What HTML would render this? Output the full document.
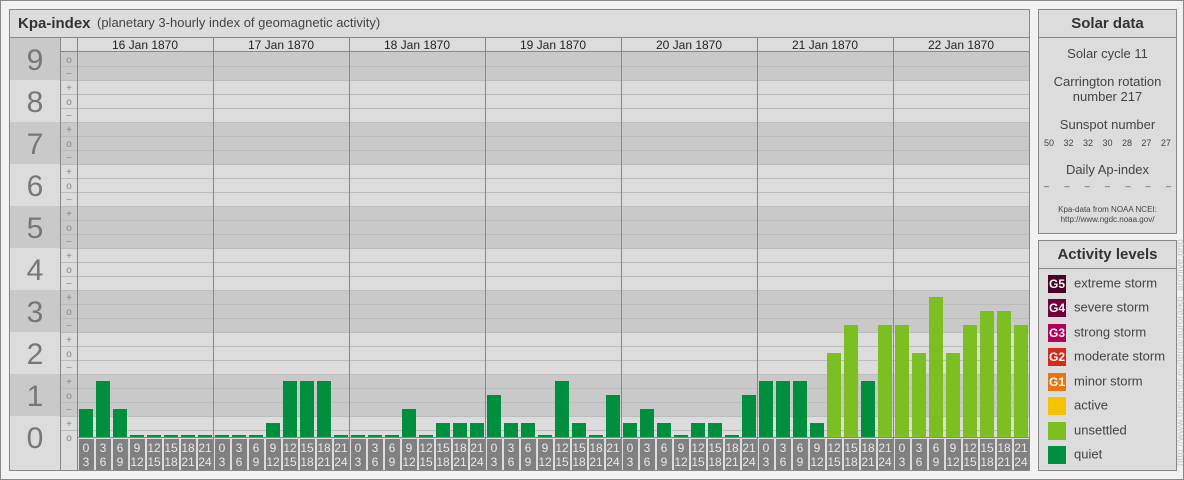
<!DOCTYPE html>
<html><head><meta charset="utf-8"><style>
body{margin:0;width:1184px;height:480px;background:#f2f2f2;font-family:"Liberation Sans",sans-serif;overflow:hidden;position:relative}
.frame{position:absolute;left:0;top:0;width:1182px;height:478px;border:1px solid #888}
.panel{position:absolute;background:#dcdcdc;border:1px solid #888;box-sizing:border-box}
.ttl{position:absolute;left:0;right:0;top:0;height:28px;border-bottom:1px solid #888;box-sizing:border-box;text-align:center;font-weight:bold;font-size:15px;line-height:28px;color:#333}
.c{text-align:center;color:#444;font-size:13px;position:absolute;left:0;right:0}
.lv{position:absolute;left:9px;font-size:13px;color:#444}
.lv b{display:inline-block;width:18px;height:18px;vertical-align:middle;margin-right:8px;color:#fff;font-size:12px;text-align:center;line-height:18px}
</style></head><body>
<div class="frame"></div>
<div class="panel" style="left:9px;top:9px;width:1021px;height:462px"></div>
<svg style="position:absolute;left:0;top:0" width="1184" height="480" font-family="Liberation Sans, sans-serif">
<g fill="#c9c9c9">
<rect x="10" y="37" width="50" height="15"/>
<rect x="10" y="52" width="1019" height="28"/><rect x="10" y="122" width="1019" height="42"/><rect x="10" y="206" width="1019" height="42"/><rect x="10" y="290" width="1019" height="42"/><rect x="10" y="374" width="1019" height="42"/>
</g>
<g stroke="#bcbcbc" stroke-width="1">
<path d="M60 66.5H1029M60 80.5H1029M60 94.5H1029M60 108.5H1029M60 122.5H1029M60 136.5H1029M60 150.5H1029M60 164.5H1029M60 178.5H1029M60 192.5H1029M60 206.5H1029M60 220.5H1029M60 234.5H1029M60 248.5H1029M60 262.5H1029M60 276.5H1029M60 290.5H1029M60 304.5H1029M60 318.5H1029M60 332.5H1029M60 346.5H1029M60 360.5H1029M60 374.5H1029M60 388.5H1029M60 402.5H1029M60 416.5H1029M60 430.5H1029"/>
</g>
<path d="M9 37.5H1029M60 51.5H1029M60.5 37V470M77.5 37V470M213.5 37V470M349.5 37V470M485.5 37V470M621.5 37V470M757.5 37V470M893.5 37V470M77 437.5H1029" stroke="#888" fill="none"/>
<text x="18" y="28" font-size="15" font-weight="bold" fill="#333">Kpa-index</text>
<text x="97" y="27" font-size="13" fill="#444">(planetary 3-hourly index of geomagnetic activity)</text>
<g font-size="12" fill="#222" text-anchor="middle">
<text x="145" y="49">16 Jan 1870</text><text x="281" y="49">17 Jan 1870</text><text x="417" y="49">18 Jan 1870</text><text x="553" y="49">19 Jan 1870</text><text x="689" y="49">20 Jan 1870</text><text x="825" y="49">21 Jan 1870</text><text x="961" y="49">22 Jan 1870</text>
</g>
<g font-size="30" fill="#777" text-anchor="middle">
<text x="35" y="70">9</text><text x="35" y="112">8</text><text x="35" y="154">7</text><text x="35" y="196">6</text><text x="35" y="238">5</text><text x="35" y="280">4</text><text x="35" y="322">3</text><text x="35" y="364">2</text><text x="35" y="406">1</text><text x="35" y="448">0</text>
</g>
<g font-size="10" fill="#888" text-anchor="middle">
<text x="69" y="63">o</text><text x="69" y="77">−</text><text x="69" y="91">+</text><text x="69" y="105">o</text><text x="69" y="119">−</text><text x="69" y="133">+</text><text x="69" y="147">o</text><text x="69" y="161">−</text><text x="69" y="175">+</text><text x="69" y="189">o</text><text x="69" y="203">−</text><text x="69" y="217">+</text><text x="69" y="231">o</text><text x="69" y="245">−</text><text x="69" y="259">+</text><text x="69" y="273">o</text><text x="69" y="287">−</text><text x="69" y="301">+</text><text x="69" y="315">o</text><text x="69" y="329">−</text><text x="69" y="343">+</text><text x="69" y="357">o</text><text x="69" y="371">−</text><text x="69" y="385">+</text><text x="69" y="399">o</text><text x="69" y="413">−</text><text x="69" y="427">+</text><text x="69" y="441">o</text>
</g>
<g fill="#008f3e">
<rect x="79" y="409" width="14" height="28"/><rect x="96" y="381" width="14" height="56"/><rect x="113" y="409" width="14" height="28"/><rect x="130" y="435" width="14" height="2"/><rect x="147" y="435" width="14" height="2"/><rect x="164" y="435" width="14" height="2"/><rect x="181" y="435" width="14" height="2"/><rect x="198" y="435" width="14" height="2"/>
<rect x="215" y="435" width="14" height="2"/><rect x="232" y="435" width="14" height="2"/><rect x="249" y="435" width="14" height="2"/><rect x="266" y="423" width="14" height="14"/><rect x="283" y="381" width="14" height="56"/><rect x="300" y="381" width="14" height="56"/><rect x="317" y="381" width="14" height="56"/><rect x="334" y="435" width="14" height="2"/>
<rect x="351" y="435" width="14" height="2"/><rect x="368" y="435" width="14" height="2"/><rect x="385" y="435" width="14" height="2"/><rect x="402" y="409" width="14" height="28"/><rect x="419" y="435" width="14" height="2"/><rect x="436" y="423" width="14" height="14"/><rect x="453" y="423" width="14" height="14"/><rect x="470" y="423" width="14" height="14"/>
<rect x="487" y="395" width="14" height="42"/><rect x="504" y="423" width="14" height="14"/><rect x="521" y="423" width="14" height="14"/><rect x="538" y="435" width="14" height="2"/><rect x="555" y="381" width="14" height="56"/><rect x="572" y="423" width="14" height="14"/><rect x="589" y="435" width="14" height="2"/><rect x="606" y="395" width="14" height="42"/>
<rect x="623" y="423" width="14" height="14"/><rect x="640" y="409" width="14" height="28"/><rect x="657" y="423" width="14" height="14"/><rect x="674" y="435" width="14" height="2"/><rect x="691" y="423" width="14" height="14"/><rect x="708" y="423" width="14" height="14"/><rect x="725" y="435" width="14" height="2"/><rect x="742" y="395" width="14" height="42"/>
<rect x="759" y="381" width="14" height="56"/><rect x="776" y="381" width="14" height="56"/><rect x="793" y="381" width="14" height="56"/><rect x="810" y="423" width="14" height="14"/><rect x="861" y="381" width="14" height="56"/>
</g>
<g fill="#7bbf22">
<rect x="827" y="353" width="14" height="84"/><rect x="844" y="325" width="14" height="112"/><rect x="878" y="325" width="14" height="112"/>
<rect x="895" y="325" width="14" height="112"/><rect x="912" y="353" width="14" height="84"/><rect x="929" y="297" width="14" height="140"/><rect x="946" y="353" width="14" height="84"/><rect x="963" y="325" width="14" height="112"/><rect x="980" y="311" width="14" height="126"/><rect x="997" y="311" width="14" height="126"/><rect x="1014" y="325" width="14" height="112"/>
</g>
<g fill="#808080">
<rect x="79" y="439" width="15" height="31"/><rect x="96" y="439" width="15" height="31"/><rect x="113" y="439" width="15" height="31"/><rect x="130" y="439" width="15" height="31"/><rect x="147" y="439" width="15" height="31"/><rect x="164" y="439" width="15" height="31"/><rect x="181" y="439" width="15" height="31"/><rect x="198" y="439" width="15" height="31"/>
<rect x="215" y="439" width="15" height="31"/><rect x="232" y="439" width="15" height="31"/><rect x="249" y="439" width="15" height="31"/><rect x="266" y="439" width="15" height="31"/><rect x="283" y="439" width="15" height="31"/><rect x="300" y="439" width="15" height="31"/><rect x="317" y="439" width="15" height="31"/><rect x="334" y="439" width="15" height="31"/>
<rect x="351" y="439" width="15" height="31"/><rect x="368" y="439" width="15" height="31"/><rect x="385" y="439" width="15" height="31"/><rect x="402" y="439" width="15" height="31"/><rect x="419" y="439" width="15" height="31"/><rect x="436" y="439" width="15" height="31"/><rect x="453" y="439" width="15" height="31"/><rect x="470" y="439" width="15" height="31"/>
<rect x="487" y="439" width="15" height="31"/><rect x="504" y="439" width="15" height="31"/><rect x="521" y="439" width="15" height="31"/><rect x="538" y="439" width="15" height="31"/><rect x="555" y="439" width="15" height="31"/><rect x="572" y="439" width="15" height="31"/><rect x="589" y="439" width="15" height="31"/><rect x="606" y="439" width="15" height="31"/>
<rect x="623" y="439" width="15" height="31"/><rect x="640" y="439" width="15" height="31"/><rect x="657" y="439" width="15" height="31"/><rect x="674" y="439" width="15" height="31"/><rect x="691" y="439" width="15" height="31"/><rect x="708" y="439" width="15" height="31"/><rect x="725" y="439" width="15" height="31"/><rect x="742" y="439" width="15" height="31"/>
<rect x="759" y="439" width="15" height="31"/><rect x="776" y="439" width="15" height="31"/><rect x="793" y="439" width="15" height="31"/><rect x="810" y="439" width="15" height="31"/><rect x="827" y="439" width="15" height="31"/><rect x="844" y="439" width="15" height="31"/><rect x="861" y="439" width="15" height="31"/><rect x="878" y="439" width="15" height="31"/>
<rect x="895" y="439" width="15" height="31"/><rect x="912" y="439" width="15" height="31"/><rect x="929" y="439" width="15" height="31"/><rect x="946" y="439" width="15" height="31"/><rect x="963" y="439" width="15" height="31"/><rect x="980" y="439" width="15" height="31"/><rect x="997" y="439" width="15" height="31"/><rect x="1014" y="439" width="15" height="31"/>
</g>
<g font-size="12" fill="#e8e8e8" text-anchor="middle">
<text x="86" y="452">0</text><text x="86" y="466">3</text><text x="103" y="452">3</text><text x="103" y="466">6</text><text x="120" y="452">6</text><text x="120" y="466">9</text><text x="137" y="452">9</text><text x="137" y="466">12</text><text x="154" y="452">12</text><text x="154" y="466">15</text><text x="171" y="452">15</text><text x="171" y="466">18</text><text x="188" y="452">18</text><text x="188" y="466">21</text><text x="205" y="452">21</text><text x="205" y="466">24</text>
<text x="222" y="452">0</text><text x="222" y="466">3</text><text x="239" y="452">3</text><text x="239" y="466">6</text><text x="256" y="452">6</text><text x="256" y="466">9</text><text x="273" y="452">9</text><text x="273" y="466">12</text><text x="290" y="452">12</text><text x="290" y="466">15</text><text x="307" y="452">15</text><text x="307" y="466">18</text><text x="324" y="452">18</text><text x="324" y="466">21</text><text x="341" y="452">21</text><text x="341" y="466">24</text>
<text x="358" y="452">0</text><text x="358" y="466">3</text><text x="375" y="452">3</text><text x="375" y="466">6</text><text x="392" y="452">6</text><text x="392" y="466">9</text><text x="409" y="452">9</text><text x="409" y="466">12</text><text x="426" y="452">12</text><text x="426" y="466">15</text><text x="443" y="452">15</text><text x="443" y="466">18</text><text x="460" y="452">18</text><text x="460" y="466">21</text><text x="477" y="452">21</text><text x="477" y="466">24</text>
<text x="494" y="452">0</text><text x="494" y="466">3</text><text x="511" y="452">3</text><text x="511" y="466">6</text><text x="528" y="452">6</text><text x="528" y="466">9</text><text x="545" y="452">9</text><text x="545" y="466">12</text><text x="562" y="452">12</text><text x="562" y="466">15</text><text x="579" y="452">15</text><text x="579" y="466">18</text><text x="596" y="452">18</text><text x="596" y="466">21</text><text x="613" y="452">21</text><text x="613" y="466">24</text>
<text x="630" y="452">0</text><text x="630" y="466">3</text><text x="647" y="452">3</text><text x="647" y="466">6</text><text x="664" y="452">6</text><text x="664" y="466">9</text><text x="681" y="452">9</text><text x="681" y="466">12</text><text x="698" y="452">12</text><text x="698" y="466">15</text><text x="715" y="452">15</text><text x="715" y="466">18</text><text x="732" y="452">18</text><text x="732" y="466">21</text><text x="749" y="452">21</text><text x="749" y="466">24</text>
<text x="766" y="452">0</text><text x="766" y="466">3</text><text x="783" y="452">3</text><text x="783" y="466">6</text><text x="800" y="452">6</text><text x="800" y="466">9</text><text x="817" y="452">9</text><text x="817" y="466">12</text><text x="834" y="452">12</text><text x="834" y="466">15</text><text x="851" y="452">15</text><text x="851" y="466">18</text><text x="868" y="452">18</text><text x="868" y="466">21</text><text x="885" y="452">21</text><text x="885" y="466">24</text>
<text x="902" y="452">0</text><text x="902" y="466">3</text><text x="919" y="452">3</text><text x="919" y="466">6</text><text x="936" y="452">6</text><text x="936" y="466">9</text><text x="953" y="452">9</text><text x="953" y="466">12</text><text x="970" y="452">12</text><text x="970" y="466">15</text><text x="987" y="452">15</text><text x="987" y="466">18</text><text x="1004" y="452">18</text><text x="1004" y="466">21</text><text x="1021" y="452">21</text><text x="1021" y="466">24</text>
</g>
<text transform="translate(1183,466) rotate(-90)" font-size="10" fill="#c8c8c8">http://www.theusner.eu/terra/aurora/kp_archive.php</text>
</svg>
<div class="panel" style="left:1038px;top:9px;width:139px;height:225px">
<div class="ttl">Solar data</div>
<div class="c" style="top:36px">Solar cycle 11</div>
<div class="c" style="top:64px;line-height:15px">Carrington rotation<br>number 217</div>
<div class="c" style="top:107px">Sunspot number</div>
<div style="position:absolute;left:5px;right:5px;top:128px;font-size:9px;color:#444;display:flex;justify-content:space-between"><span>50</span><span>32</span><span>32</span><span>30</span><span>28</span><span>27</span><span>27</span></div>
<div class="c" style="top:152px">Daily Ap-index</div>
<div style="position:absolute;left:5px;right:5px;top:171px;font-size:9px;color:#444;display:flex;justify-content:space-between"><span>–</span><span>–</span><span>–</span><span>–</span><span>–</span><span>–</span><span>–</span></div>
<div class="c" style="top:195px;font-size:8px;line-height:10px">Kpa-data from NOAA NCEI:<br>http://www.ngdc.noaa.gov/</div>
</div>
<div class="panel" style="left:1038px;top:240px;width:139px;height:231px">
<div class="ttl">Activity levels</div>
<div class="lv" style="top:34px"><b style="background:#4d0026">G5</b>extreme storm</div>
<div class="lv" style="top:58px"><b style="background:#70003c">G4</b>severe storm</div>
<div class="lv" style="top:83px"><b style="background:#b0005a">G3</b>strong storm</div>
<div class="lv" style="top:107px"><b style="background:#d8281a">G2</b>moderate storm</div>
<div class="lv" style="top:132px"><b style="background:#e87510">G1</b>minor storm</div>
<div class="lv" style="top:156px"><b style="background:#f5c300"></b>active</div>
<div class="lv" style="top:181px"><b style="background:#7bbf22"></b>unsettled</div>
<div class="lv" style="top:205px"><b style="background:#008f3e"></b>quiet</div>
</div>
</body></html>
